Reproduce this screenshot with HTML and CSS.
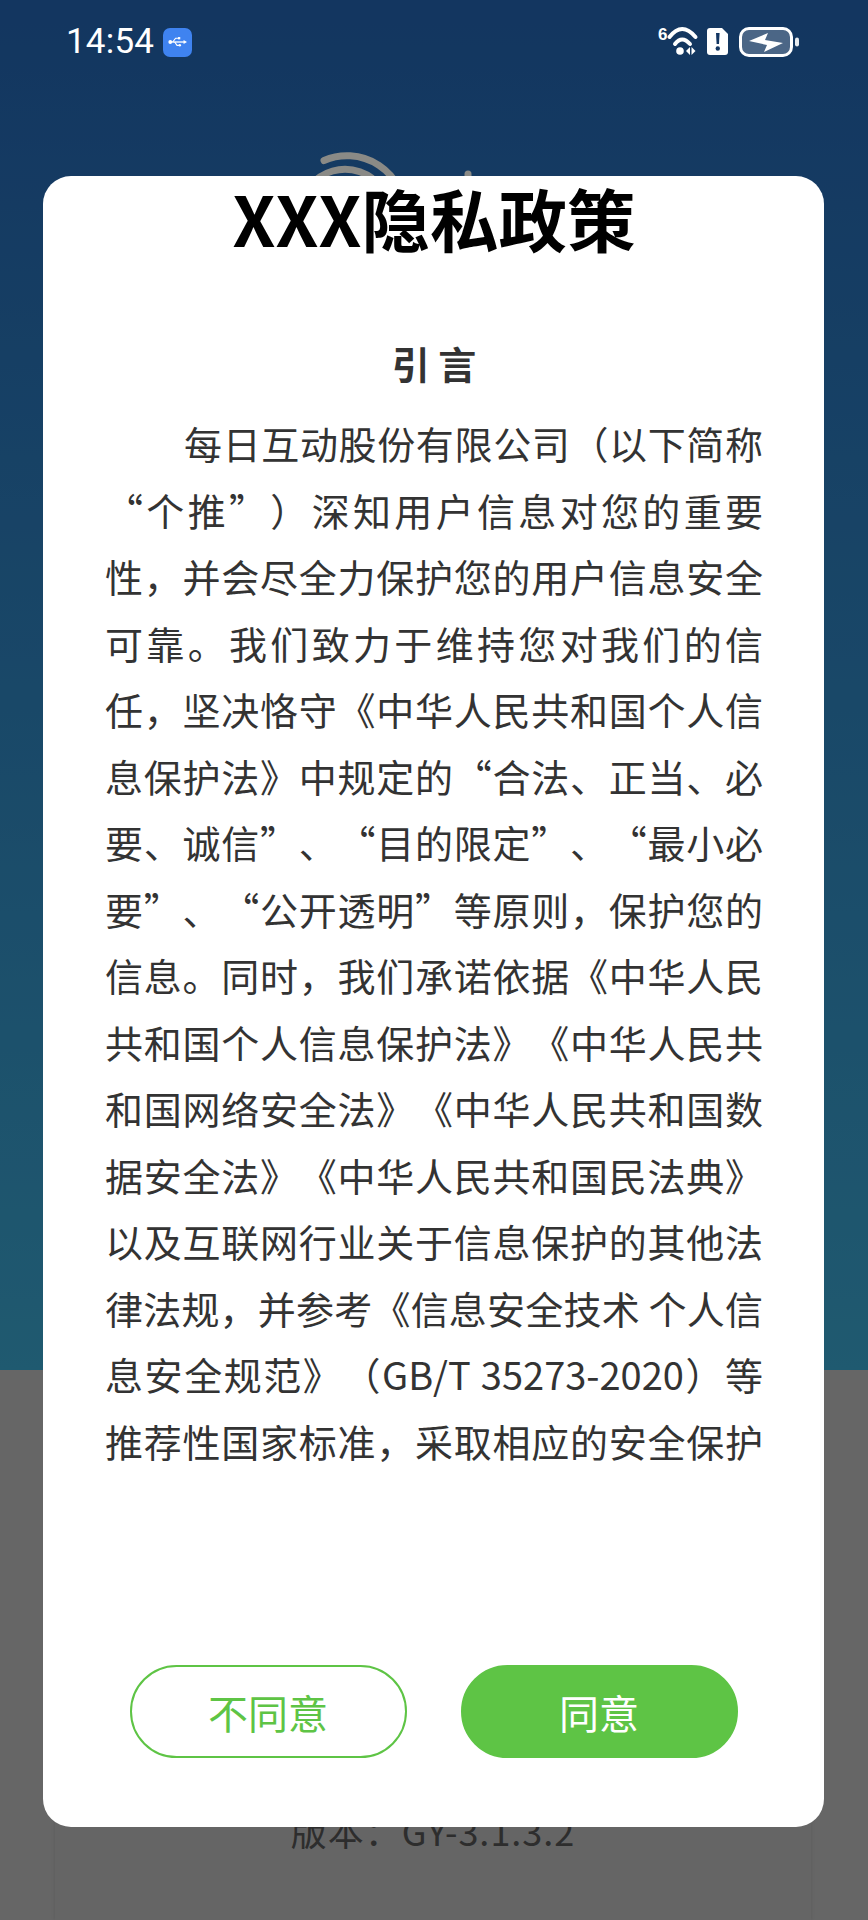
FILE: index.html
```html
<!DOCTYPE html>
<html lang="zh-CN">
<head>
<meta charset="utf-8">
<title>XXX隐私政策</title>
<link rel="stylesheet" href="styles.css">
</head>
<body>
<div class="app">
  <header class="status-bar">
    <div class="status-left">
      <span class="time">14:54</span>
      <span class="usb-badge">
        <svg class="usb-icon" viewBox="0 0 20 12" aria-hidden="true">
          <path d="M1 6h16" fill="none" stroke="#fff" stroke-width="1.4"/>
          <path d="M20 6l-3.6-2.2v4.4z" fill="#fff"/>
          <circle cx="2.4" cy="6" r="2" fill="#fff"/>
          <path d="M5 6l3-4h3M7 6l2.500 3.500h2" fill="none" stroke="#fff" stroke-width="1.2"/>
          <rect x="10.500" y="0.800" width="2.400" height="2.400" fill="#fff"/>
          <circle cx="12.400" cy="9.500" r="1.300" fill="#fff"/>
        </svg>
      </span>
    </div>
    <svg class="status-icons" viewBox="658 24 142 36" aria-hidden="true">
      <text x="658" y="40" class="net-label">6</text>
      <g fill="none" stroke="#fff" stroke-width="4" stroke-linecap="round">
        <path d="M669.500 37Q682 21 695.500 37"/>
        <path d="M675 44Q682 35 690 44"/>
      </g>
      <circle cx="680" cy="51" r="3.800" fill="#fff"/>
      <path d="M690 47v8l-4-4zM691.500 47v8l4-4z" fill="#fff"/>
      <path d="M710 28h12l6 6v18a3 3 0 0 1-3 3h-15a3 3 0 0 1-3-3V31a3 3 0 0 1 3-3z" fill="#fff"/>
      <path d="M716 33h3.600l-.6 11h-2.400z" fill="#123562"/>
      <circle cx="717.800" cy="48.500" r="2.200" fill="#123562"/>
      <rect x="740.500" y="28.500" width="51" height="27" rx="8.500" fill="#fff" fill-opacity="0.24" stroke="#fff" stroke-width="3"/>
      <rect x="795" y="37.500" width="4" height="9" rx="2" fill="#fff" fill-opacity="0.9"/>
      <path d="M749 41l19-8-3 7 18 3-19 9 3-7z" fill="#fff"/>
    </svg>
  </header>
  <section class="hero">
    <svg class="hero-logo" viewBox="0 140 868 60" aria-hidden="true">
      <g fill="none" stroke="#e6e6e0" stroke-width="7" stroke-linecap="round">
        <path d="M324 160.500A58 58 0 0 1 405 214"/>
        <path d="M310 186A45 45 0 0 1 390 214"/>
        <path d="M468 174V200"/>
      </g>
    </svg>
  </section>
  <section class="lower">
    <div class="lower-card">
      <p class="version">版本：GY-3.1.3.2</p>
    </div>
  </section>
  <div class="scrim"></div>
  <div class="modal" role="dialog">
    <h1 class="modal-title">XXX隐私政策</h1>
    <h2 class="modal-subtitle">引 言</h2>
    <p class="policy">每日互动股份有限公司（以下简称<br>
“个推”）深知用户信息对您的重要<br>
性，并会尽全力保护您的用户信息安全<br>
可靠。我们致力于维持您对我们的信<br>
任，坚决恪守《中华人民共和国个人信<br>
息保护法》中规定的“合法、正当、必<br>
要、诚信”、“目的限定”、“最小必<br>
要”、“公开透明”等原则，保护您的<br>
信息。同时，我们承诺依据《中华人民<br>
共和国个人信息保护法》《中华人民共<br>
和国网络安全法》《中华人民共和国数<br>
据安全法》《中华人民共和国民法典》<br>
以及互联网行业关于信息保护的其他法<br>
律法规，并参考《信息安全技术 个人信<br>
息安全规范》（GB/T 35273-2020）等<br>
推荐性国家标准，采取相应的安全保护</p>
    <div class="modal-actions">
      <button class="btn btn-outline" type="button">不同意</button>
      <button class="btn btn-solid" type="button">同意</button>
    </div>
  </div>
</div>
</body>
</html>
```

FILE: styles.css
```css
* {
  box-sizing: border-box;
}

html,
body {
  margin: 0;
  padding: 0;
}

body {
  width: 868px;
  height: 1920px;
  overflow: hidden;
  font-family: "Noto Sans CJK SC", "Noto Sans", sans-serif;
}

.app {
  position: relative;
  display: flex;
  flex-direction: column;
  width: 868px;
  height: 1920px;
  overflow: hidden;
  background: #aaaaaa;
}

.status-bar {
  position: absolute;
  top: 0;
  left: 0;
  right: 0;
  z-index: 3;
  display: flex;
  align-items: center;
  justify-content: space-between;
  height: 84px;
  padding: 0 68px 0 66px;
  color: #ffffff;
}

.status-left {
  display: flex;
  align-items: center;
  gap: 9px;
}

.time {
  font-family: Roboto, sans-serif;
  font-size: 35px;
  line-height: 40px;
  letter-spacing: 0.2px;
}

.usb-badge {
  display: flex;
  align-items: center;
  justify-content: center;
  width: 29px;
  height: 29px;
  border-radius: 7px;
  background: #3f83f0;
}

.usb-icon {
  display: block;
  width: 19px;
  height: 12px;
}

.status-icons {
  display: block;
  width: 142px;
  height: 36px;
}

.net-label {
  font-family: "Liberation Sans", sans-serif;
  font-size: 17px;
  font-weight: 700;
  fill: #ffffff;
}

.hero {
  flex: none;
  height: 1370px;
  padding-top: 140px;
  background: linear-gradient(180deg, #205aa0 0%, #3596bb 100%);
}

.hero-logo {
  display: block;
  width: 868px;
  height: 60px;
}

.lower {
  flex: 1;
  padding: 0 57px 0 55px;
}

.lower-card {
  height: 100%;
  padding-top: 435px;
  background: #a8a8a8;
  box-shadow: 0 0 4px rgba(0, 0, 0, 0.12);
}

.version {
  margin: 0;
  font-size: 36px;
  line-height: 50px;
  letter-spacing: 1px;
  text-align: center;
  color: #4c4c4c;
}

.scrim {
  position: absolute;
  inset: 0;
  z-index: 1;
  background: rgba(0, 0, 0, 0.4);
}

.modal {
  position: absolute;
  top: 176px;
  left: 43px;
  z-index: 2;
  display: flex;
  flex-direction: column;
  width: 781px;
  height: 1651px;
  padding: 0 61px 69px 62px;
  border-radius: 28px;
  background: #ffffff;
}

.modal-title {
  margin: 0 0 70px;
  font-size: 68.5px;
  font-weight: 700;
  line-height: 84px;
  text-align: center;
  color: #000000;
}

.modal-subtitle {
  margin: 0 0 14px;
  font-size: 38px;
  font-weight: 700;
  line-height: 66px;
  text-align: center;
  color: #333333;
}

.policy {
  margin: 0;
  font-size: 38px;
  line-height: 66.5px;
  text-indent: 79px;
  text-align: justify;
  text-align-last: justify;
  text-spacing-trim: space-all;
  color: #333333;
}

.modal-actions {
  display: flex;
  justify-content: center;
  gap: 54px;
  margin-top: auto;
  margin-left: -31px;
  margin-right: -30px;
}

.btn {
  width: 277px;
  height: 93px;
  padding: 0;
  border: 2px solid #5ec445;
  border-radius: 47px;
  font-family: inherit;
  font-size: 40px;
  line-height: 1;
}

.btn-outline {
  background: #ffffff;
  color: #5ec445;
}

.btn-solid {
  background: #5ec445;
  color: #ffffff;
}
```
